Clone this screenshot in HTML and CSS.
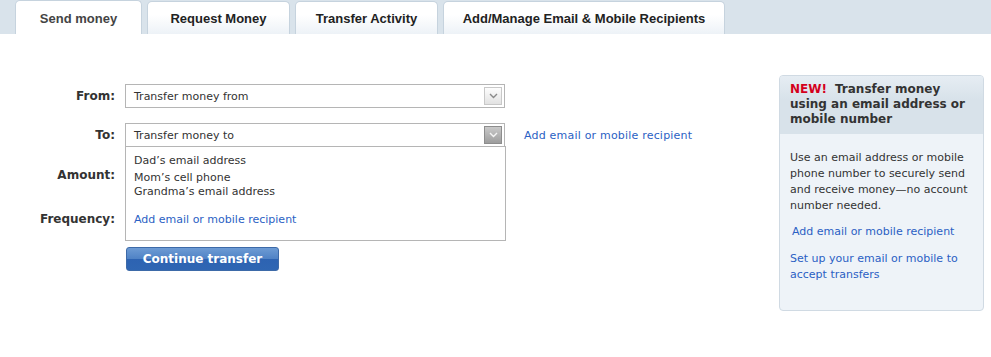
FILE: index.html
```html
<!DOCTYPE html>
<html lang="en">
<head>
<meta charset="UTF-8" />
<title>Send money</title>
<link rel="stylesheet" href="styles.css">
</head>
<body>
  <div class="tabs">
    <a class="tab active w1">Send money</a>
    <a class="tab w2">Request Money</a>
    <a class="tab w2">Transfer Activity</a>
    <a class="tab w3">Add/Manage Email &amp; Mobile Recipients</a>
  </div>

  <div class="main">
    <form class="transfer">
      <div class="row row-from">
        <label>From:</label>
        <div class="select">
          <span>Transfer money from</span>
          <span class="arrow"><svg width="9" height="6" viewBox="0 0 9 6"><path d="M1 1l3.5 3.5L8 1" fill="none" stroke="#8a8a8a" stroke-width="1.4"/></svg></span>
        </div>
      </div>
      <div class="row row-to">
        <label>To:</label>
        <div class="select open">
          <span>Transfer money to</span>
          <span class="arrow"><svg width="9" height="6" viewBox="0 0 9 6"><path d="M1 1l3.5 3.5L8 1" fill="none" stroke="#f4f4f4" stroke-width="1.4"/></svg></span>
          <ul class="options">
            <li class="first">Dad’s email address</li>
            <li>Mom’s cell phone</li>
            <li>Grandma’s email address</li>
            <li class="add"><a>Add email or mobile recipient</a></li>
          </ul>
        </div>
        <a class="side-link">Add email or mobile recipient</a>
      </div>
      <div class="row row-amount">
        <label>Amount:</label>
        <div class="input"></div>
      </div>
      <div class="row row-freq">
        <label>Frequency:</label>
        <div class="input"></div>
      </div>
      <div class="actions">
        <button type="button" class="btn">Continue transfer</button>
      </div>
    </form>

    <div class="promo">
      <div class="promo-head"><span class="new">NEW!</span>Transfer money using an email address or mobile number</div>
      <div class="promo-body">
        <p>Use an email address or mobile phone number to securely send and receive money—no account number needed.</p>
        <a class="promo-link first">Add email or mobile recipient</a>
        <a class="promo-link">Set up your email or mobile to accept transfers</a>
      </div>
    </div>
  </div>
</body>
</html>
```
FILE: styles.css
```css
body {
  margin: 0;
  background: #fff;
  color: #333;
  font-family: "DejaVu Sans", Verdana, sans-serif;
  font-size: 11px;
}
a {
  color: #2b5fc4;
  cursor: pointer;
}
.tabs {
  background: #d9e3eb;
  height: 34px;
  padding-left: 15px;
  display: flex;
  align-items: flex-end;
  gap: 5px;
}
.tab {
  box-sizing: border-box;
  height: 33px;
  border: 1px solid #c6d3de;
  border-bottom: none;
  border-radius: 5px 5px 0 0;
  background: linear-gradient(#ffffff 40%, #edf2f7);
  font-family: "Liberation Sans", Arial, sans-serif;
  font-weight: bold;
  font-size: 13px;
  color: #222;
  display: flex;
  align-items: center;
  justify-content: center;
  padding-top: 1px;
}
.tab.active {
  height: 34px;
  background: #fff;
  color: #444;
}
.w1 { width: 127px; }
.w2 { width: 143px; }
.w3 { width: 282px; }

.main {
  display: flex;
  justify-content: space-between;
  padding: 41px 7px 0 0;
}
.transfer {
  padding-top: 9px;
}
.row {
  display: flex;
  align-items: center;
  height: 24px;
}
.row label {
  width: 115px;
  padding-right: 10px;
  text-align: right;
  font-weight: bold;
  font-size: 12px;
  color: #333;
}
.row-to { margin-top: 15px; }
.row-amount { margin-top: 16px; }
.row-freq { margin-top: 20px; }
.select {
  position: relative;
  box-sizing: border-box;
  width: 380px;
  height: 24px;
  border: 1px solid #b5b5b5;
  display: flex;
  align-items: center;
  justify-content: space-between;
  padding: 0 2px 0 8px;
  background: #fff;
}
.arrow {
  box-sizing: border-box;
  width: 18px;
  height: 18px;
  border: 1px solid #c8c8c8;
  background: linear-gradient(#fdfdfd, #e2e2e2);
  display: flex;
  align-items: center;
  justify-content: center;
}
.open .arrow {
  border-color: #8d8d8d;
  background: linear-gradient(#c9c9c9, #9d9d9d);
}
.options {
  position: absolute;
  top: 22px;
  left: -1px;
  box-sizing: border-box;
  width: 381px;
  height: 95px;
  margin: 0;
  padding: 0 0 0 8px;
  list-style: none;
  background: #fff;
  border: 1px solid #b5b5b5;
  z-index: 2;
}
.options li {
  line-height: 14px;
}
.options .first { margin-top: 7px; margin-bottom: 3px; }
.options .add { margin-top: 14px; }
.side-link {
  margin-left: 19px;
  letter-spacing: 0.2px;
}
.input {
  box-sizing: border-box;
  width: 120px;
  height: 22px;
  border: 1px solid #b5b5b5;
}
.actions {
  padding: 16px 0 0 126px;
}
.btn {
  width: 153px;
  height: 24px;
  border: 1px solid #3d6aa8;
  border-radius: 3px;
  background: linear-gradient(#6d9bd4 0%, #4f82c5 50%, #2d63b2 51%, #2f66b3 100%);
  color: #fff;
  font-family: "DejaVu Sans", Verdana, sans-serif;
  font-weight: bold;
  font-size: 12px;
  padding: 0;
}

.promo {
  box-sizing: border-box;
  width: 205px;
  height: 236px;
  border: 1px solid #d0dae3;
  border-radius: 4px;
  background: #eef3f8;
  overflow: hidden;
}
.promo-head {
  background: linear-gradient(#e6edf3, #d8e2ea 40%);
  padding: 6px 10px 7px;
  font-weight: bold;
  font-size: 12px;
  line-height: 15px;
  color: #333;
}
.new {
  color: #d4001c;
  margin-right: 8px;
}
.promo-body {
  padding: 16px 10px 0;
}
.promo-body p {
  margin: 0;
  line-height: 16px;
}
.promo-link {
  display: block;
  line-height: 16px;
}
.promo-link.first {
  margin: 10px 0 0 2px;
}
.promo-link + .promo-link {
  margin-top: 11px;
}
```
